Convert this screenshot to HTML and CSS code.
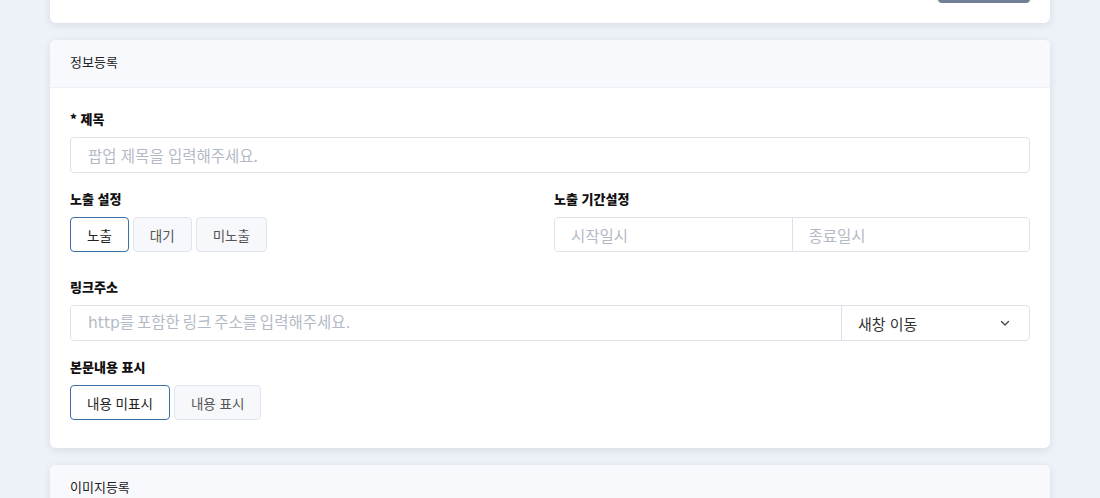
FILE: index.html
```html
<!DOCTYPE html>
<html lang="ko">
<head>
    <meta charset="UTF-8">
    <meta name="viewport" content="width=device-width, initial-scale=1.0">
    <title>팝업 등록</title>
    <link rel="stylesheet" href="styles.css">
</head>
<body>
    <div class="page">
        <div class="card">
            <div class="card-actions">
                <button class="btn-grey" type="button"></button>
            </div>
        </div>

        <div class="card">
            <div class="card-header">정보등록</div>
            <div class="card-body">
                <div class="field">
                    <label class="field-label">* 제목</label>
                    <input class="text-input" type="text" placeholder="팝업 제목을 입력해주세요.">
                </div>

                <div class="field-row">
                    <div class="field">
                        <label class="field-label">노출 설정</label>
                        <div class="btn-group">
                            <button class="opt active" type="button">노출</button>
                            <button class="opt" type="button">대기</button>
                            <button class="opt" type="button">미노출</button>
                        </div>
                    </div>
                    <div class="field">
                        <label class="field-label">노출 기간설정</label>
                        <div class="range">
                            <input type="text" placeholder="시작일시">
                            <input type="text" placeholder="종료일시">
                        </div>
                    </div>
                </div>

                <div class="field">
                    <label class="field-label">링크주소</label>
                    <div class="link-group">
                        <input class="link-input" type="text" placeholder="http를 포함한 링크 주소를 입력해주세요.">
                        <div class="select">
                            <span>새창 이동</span>
                            <svg width="12" height="12" viewBox="0 0 12 12"><path d="M2.5 4.5 6 8l3.5-3.5" fill="none" stroke="#444" stroke-width="1.3" stroke-linecap="round" stroke-linejoin="round"/></svg>
                        </div>
                    </div>
                </div>

                <div class="field last">
                    <label class="field-label">본문내용 표시</label>
                    <div class="btn-group">
                        <button class="opt active" type="button">내용 미표시</button>
                        <button class="opt" type="button">내용 표시</button>
                    </div>
                </div>
            </div>
        </div>

        <div class="card">
            <div class="card-header">이미지등록</div>
            <div class="card-body tall"></div>
        </div>
    </div>
</body>
</html>
```

FILE: styles.css
```css
body {
    margin: 0;
    background-color: #edf1f8;
    font-family: "Noto Sans CJK KR", "Noto Sans", sans-serif;
    color: #222;
}

.page {
    margin-top: -53px;
    padding: 0 50px;
    display: flex;
    flex-direction: column;
    gap: 17px;
}

.card {
    background: #fff;
    border-radius: 6px;
    box-shadow: 0 2px 8px rgba(30, 45, 80, 0.10);
    overflow: hidden;
}

.card-actions {
    display: flex;
    justify-content: flex-end;
    padding: 20px;
}

.btn-grey {
    width: 92px;
    height: 36px;
    border: none;
    border-radius: 4px;
    background-color: #718096;
}

.card-header {
    height: 44px;
    line-height: 44px;
    padding: 0 20px 3px;
    background-color: #f8f9fc;
    border-bottom: 1px solid #edf0f4;
    font-size: 13px;
    color: #222;
}

.card-body {
    padding: 21px 20px 28px;
}

.card-body.tall {
    height: 200px;
}

.field {
    display: flex;
    flex-direction: column;
    margin-bottom: 16px;
}

.field.last {
    margin-bottom: 0;
}

.field-row {
    display: grid;
    grid-template-columns: minmax(0, 1fr) minmax(0, 1fr);
    gap: 8px;
    margin-bottom: 9px;
}

.field-label {
    font-size: 13px;
    font-weight: 900;
    line-height: 20px;
    color: #111;
    margin-bottom: 8px;
}

input {
    font-family: inherit;
    font-size: 15.5px;
    color: #333;
    outline: none;
}

input::placeholder {
    color: #b3bac6;
}

.link-input {
    font-family: "DejaVu Sans", "Noto Sans CJK KR", sans-serif;
    word-spacing: -2px;
}

.text-input {
    height: 36px;
    box-sizing: border-box;
    border: 1px solid #dde2ea;
    border-radius: 4px;
    padding: 0 17px;
}

.btn-group {
    display: flex;
    gap: 4px;
}

.opt {
    height: 35px;
    padding: 0 16px;
    border: 1px solid #e0e4ec;
    border-radius: 4px;
    background-color: #f7f8fb;
    color: #555;
    font-family: inherit;
    font-size: 13.5px;
}

.opt.active {
    border-color: #3b70a8;
    background-color: #fff;
    color: #222;
}

.range {
    display: flex;
    height: 35px;
    border: 1px solid #dde2ea;
    border-radius: 4px;
    box-sizing: border-box;
    overflow: hidden;
}

.range input {
    flex: 1;
    min-width: 0;
    border: none;
    padding: 0 16px;
}

.range input + input {
    border-left: 1px solid #dde2ea;
}

.link-group {
    display: flex;
    height: 36px;
    border: 1px solid #dde2ea;
    border-radius: 4px;
    box-sizing: border-box;
    overflow: hidden;
}

.link-group input {
    flex: 1;
    min-width: 0;
    border: none;
    padding: 0 17px;
}

.select {
    width: 188px;
    display: flex;
    align-items: center;
    justify-content: space-between;
    padding: 0 18px 0 16px;
    box-sizing: border-box;
    border-left: 1px solid #dde2ea;
    font-size: 15px;
    color: #333;
}
```
